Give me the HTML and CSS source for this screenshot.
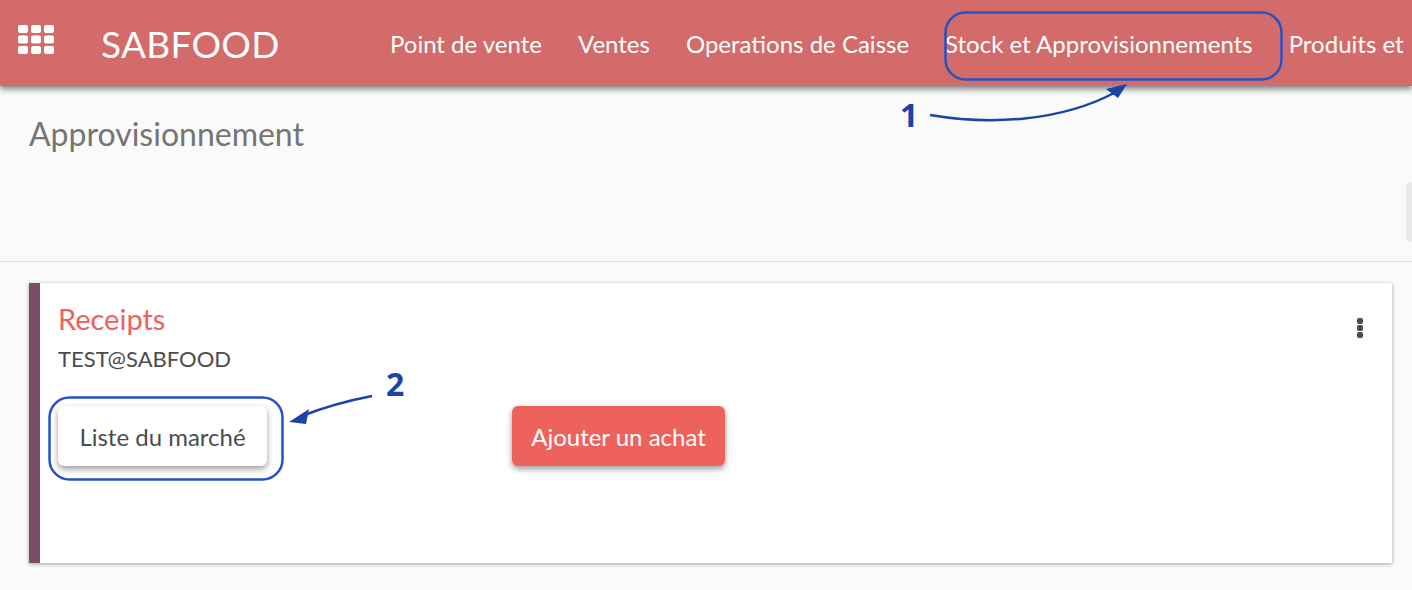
FILE: index.html
```html
<!DOCTYPE html>
<html lang="fr">
<head>
<meta charset="utf-8">
<title>SABFOOD</title>
<link rel="stylesheet" href="styles.css">
</head>
<body>
<header class="topbar">
  <svg class="apps" viewBox="0 0 36 30" width="36" height="30"><g fill="#fff">
    <rect x="0" y="0" width="10" height="8" rx="2"/><rect x="13" y="0" width="10" height="8" rx="2"/><rect x="26" y="0" width="10" height="8" rx="2"/>
    <rect x="0" y="10.5" width="10" height="8" rx="2"/><rect x="13" y="10.5" width="10" height="8" rx="2"/><rect x="26" y="10.5" width="10" height="8" rx="2"/>
    <rect x="0" y="21" width="10" height="8" rx="2"/><rect x="13" y="21" width="10" height="8" rx="2"/><rect x="26" y="21" width="10" height="8" rx="2"/>
  </g></svg>
  <div class="brand">SABFOOD</div>
  <nav class="menu">
    <a class="menu-item i1">Point de vente</a>
    <a class="menu-item i2">Ventes</a>
    <a class="menu-item i3">Operations de Caisse</a>
    <a class="menu-item i4">Stock et Approvisionnements</a>
    <a class="menu-item i5">Produits et</a>
  </nav>
</header>
<section class="panel">
  <h1 class="title">Approvisionnement</h1>
  <div class="side-stub"></div>
</section>
<main class="content">
  <article class="card">
    <div class="card-head">
      <div>
        <h2 class="card-title">Receipts</h2>
        <div class="card-sub">TEST@SABFOOD</div>
      </div>
      <svg class="kebab" viewBox="0 0 6 20" width="6" height="20"><g fill="#4c4c4c"><rect y="0" width="6" height="6" rx="2"/><rect y="7" width="6" height="6" rx="2"/><rect y="14" width="6" height="6" rx="2"/></g></svg>
    </div>
    <div class="actions">
      <button class="btn btn-light">Liste du marché</button>
      <button class="btn btn-primary">Ajouter un achat</button>
    </div>
  </article>
</main>
<svg class="notes" viewBox="0 0 1412 590" width="1412" height="590">
  <g fill="none" stroke="#2553c7" stroke-width="2.5">
    <rect x="945.5" y="12.5" width="336" height="67" rx="20"/>
    <rect x="49.5" y="397.5" width="233" height="82" rx="20"/>
  </g>
  <g fill="none" stroke="#1a44a5" stroke-width="2.5">
    <path d="M930 115 C 990 125 1060 122 1116 92"/>
    <path d="M372 396 C 346 401 322 408 302 416"/>
  </g>
  <g fill="#1a44a5">
    <path d="M1127 84 L1106 89 L1118 98 Z"/>
    <path d="M289 422 L309 409 L306 424 Z"/>
  </g>
  <text class="note-num" x="900" y="127">1</text>
  <text class="note-num" x="386" y="396">2</text>
</svg>
</body>
</html>
```
FILE: styles.css
```css
* { box-sizing: border-box; }
html, body { margin: 0; height: 590px; overflow: hidden; }
body {
  position: relative;
  background: #fafafa;
  font-family: "Lato", "Open Sans", sans-serif;
  color: #4c4c4c;
}
.topbar {
  position: relative;
  z-index: 1;
  height: 86px;
  background: #d26b69;
  box-shadow: 0 3px 6px rgba(0, 0, 0, .5);
  display: flex;
  align-items: center;
  padding-left: 18px;
  color: #fff;
  white-space: nowrap;
  overflow: hidden;
}
.apps { flex: none; width: 36px; height: 30px; margin-top: -7px; }
.brand {
  flex: none;
  width: 289px;
  margin-left: 47px;
  font-size: 37px;
  letter-spacing: .3px;
}
.menu { display: flex; gap: 36px; font-size: 24px; }
.menu-item { display: block; flex: none; }
.panel {
  position: relative;
  height: 176px;
  border-bottom: 1px solid #dedede;
  padding: 26px 0 0 29px;
}
.title {
  margin: 0;
  font-weight: 400;
  font-size: 32px;
  line-height: 44px;
  color: #757575;
}
.side-stub {
  position: absolute;
  right: 0;
  top: 96px;
  width: 6px;
  height: 60px;
  background: #e9e9e9;
  border-radius: 6px 0 0 6px;
}
.content { padding: 21px 20px 0 29px; }
.card {
  height: 280px;
  background: #fff;
  border-left: 11px solid #7c4d69;
  box-shadow: 0 1px 4px rgba(0, 0, 0, .35);
  padding: 18px 29px 0 18px;
}
.card-head { display: flex; justify-content: space-between; align-items: flex-start; }
.card-title {
  margin: 0;
  font-weight: 400;
  font-size: 29px;
  line-height: 36px;
  color: #ef5f5b;
}
.card-sub { font-size: 22px; line-height: 30px; margin-top: 7px; color: #4c4c4c; }
.kebab { margin-top: 17px; }
.actions { display: flex; align-items: center; margin-top: 32px; }
.btn {
  height: 60px;
  border: 0;
  border-radius: 6px;
  font-family: inherit;
  font-size: 24px;
  padding: 0;
}
.btn-light {
  width: 209px;
  margin-right: 245px;
  background: #fff;
  color: #4c4c4c;
  box-shadow: 0 3px 6px rgba(0, 0, 0, .4);
}
.btn-primary {
  width: 213px;
  background: #ee625e;
  color: #fff;
  box-shadow: 0 3px 6px rgba(0, 0, 0, .4);
}
.notes { position: absolute; left: 0; top: 0; z-index: 2; pointer-events: none; }
.note-num {
  font-family: "Open Sans", sans-serif;
  font-weight: 700;
  font-size: 32px;
  fill: #1a44a5;
}
```
